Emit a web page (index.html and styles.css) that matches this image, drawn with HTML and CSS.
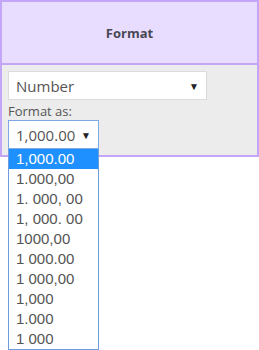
FILE: index.html
```html
<!DOCTYPE html>
<html lang="en">
<head>
    <meta charset="UTF-8">
    <meta name="viewport" content="width=device-width, initial-scale=1.0">
    <title>Format</title>
    <link rel="stylesheet" href="styles.css">
</head>
<body>
    <div class="panel">
        <div class="panel-header">Format</div>
        <div class="panel-body">
            <div class="select select-wide">
                <span>Number</span>
                <span class="arrow">&#9660;</span>
            </div>
            <label class="field-label">Format as:</label>
            <div class="select-wrap">
                <div class="select select-small focused">
                    <span>1,000.00</span>
                    <span class="arrow">&#9660;</span>
                </div>
                <ul class="options">
                    <li class="active">1,000.00</li>
                    <li>1.000,00</li>
                    <li>1. 000, 00</li>
                    <li>1, 000. 00</li>
                    <li>1000,00</li>
                    <li>1 000.00</li>
                    <li>1 000,00</li>
                    <li>1,000</li>
                    <li>1.000</li>
                    <li>1 000</li>
                </ul>
            </div>
        </div>
    </div>
</body>
</html>
```

FILE: styles.css
```css
html, body {
    height: 100%;
}

body {
    margin: 0;
    min-height: 350px;
    font-family: "Open Sans", sans-serif;
    background: #fff;
}

.panel {
    width: 259px;
    box-sizing: border-box;
    border: 2px solid #c4a6f8;
}

.panel-header {
    height: 61px;
    line-height: 63px;
    text-align: center;
    background-color: #e9ddff;
    border-bottom: 2px solid #c4a6f8;
    font-size: 13px;
    font-weight: bold;
    color: #4a4754;
}

.panel-body {
    background-color: #ececec;
    padding: 6px 6px 6px 6px;
}

.select {
    display: flex;
    align-items: center;
    justify-content: space-between;
    box-sizing: border-box;
    height: 29px;
    padding: 0 7px 0 7px;
    background: #fff;
    border: 1px solid #dcdcdc;
    font-size: 15px;
    color: #555;
}

.select-wide {
    width: 199px;
}

.select-small {
    width: 91px;
}

.select.focused {
    border-color: #7fa9e4;
}

.arrow {
    font-size: 10px;
    color: #222;
}

.field-label {
    display: block;
    margin-top: 2px;
    font-size: 13px;
    line-height: 18px;
    color: #555;
}

.select-wrap {
    position: relative;
}

.options {
    position: absolute;
    top: 29px;
    left: 0;
    z-index: 5;
    width: 91px;
    box-sizing: border-box;
    margin: 0;
    padding: 0;
    list-style: none;
    background: #fff;
    border: 1px solid #6f9ddc;
    border-top: none;
    font-family: "Liberation Sans", Arial, sans-serif;
    font-size: 15px;
    color: #555;
}

.options li {
    height: 20px;
    line-height: 20px;
    padding-left: 7px;
    white-space: nowrap;
}

.options li.active {
    background-color: #1e90ff;
    color: #fff;
}
```
